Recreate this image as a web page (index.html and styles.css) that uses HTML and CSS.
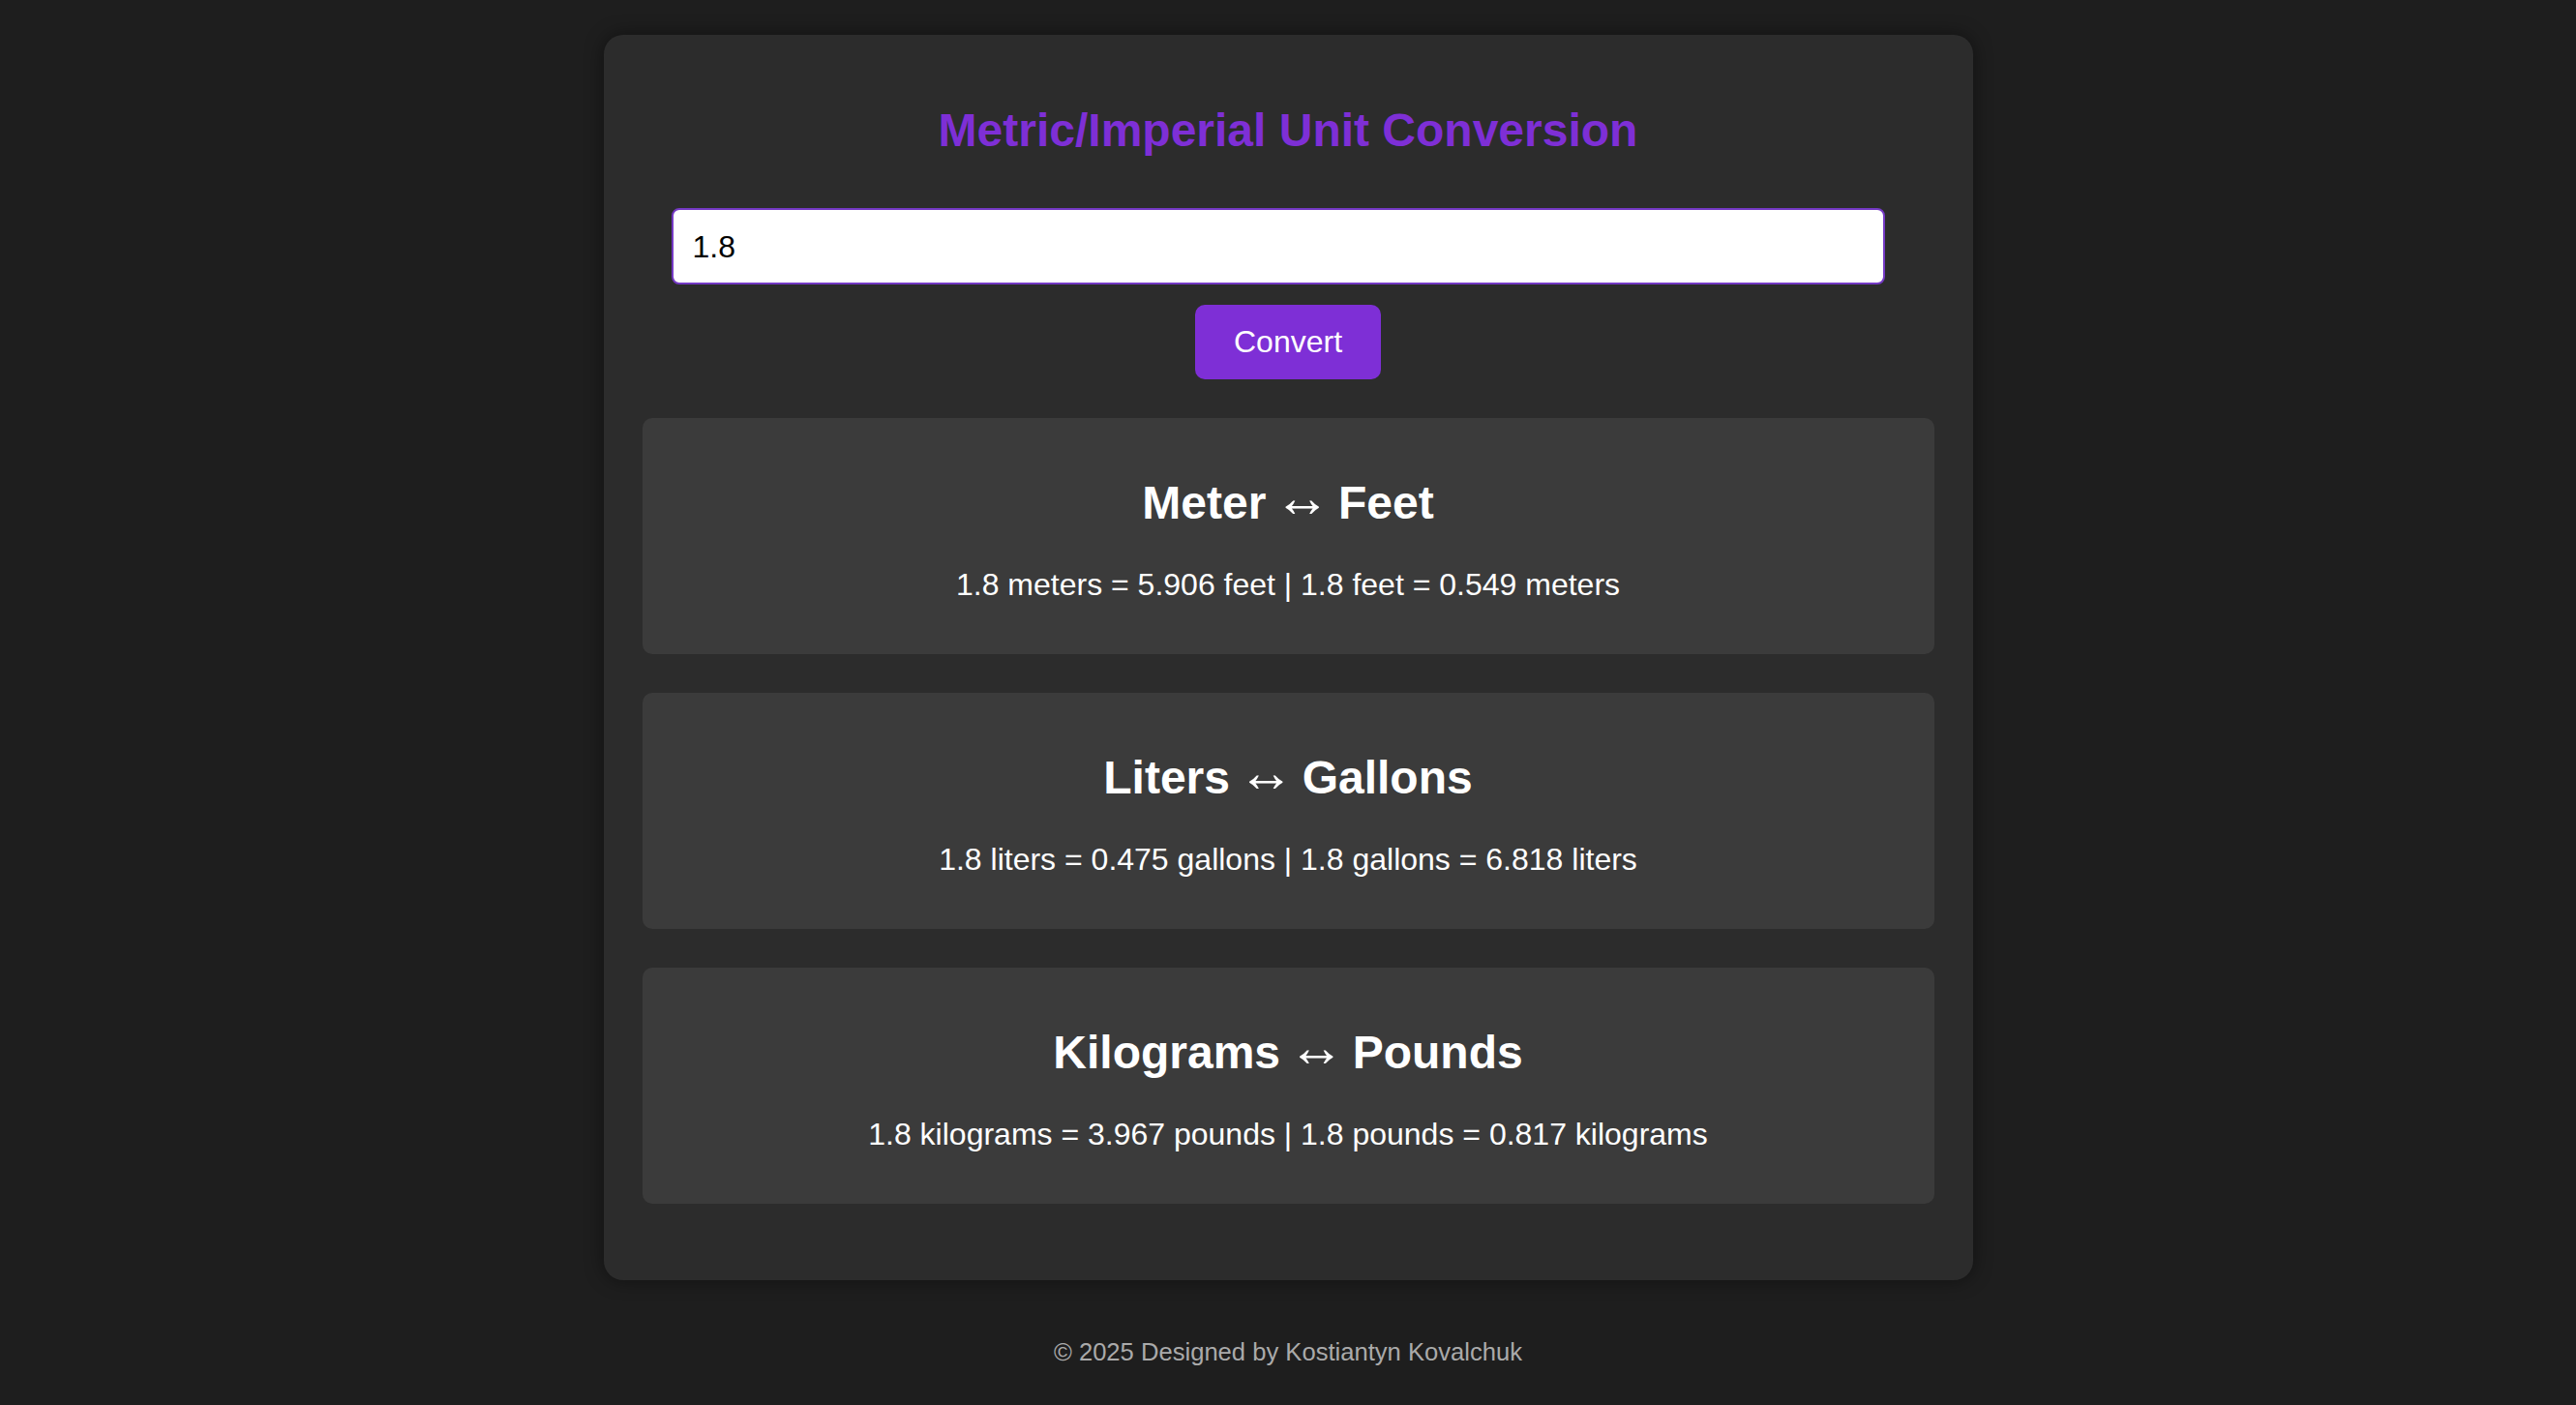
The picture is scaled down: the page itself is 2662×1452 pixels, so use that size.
FILE: index.html
```html
<!DOCTYPE html>
<html lang="en">
<head>
<meta charset="utf-8">
<title>Metric/Imperial Unit Conversion</title>
<link rel="stylesheet" href="styles.css">
</head>
<body>
<main class="container">
  <h1 class="title">Metric/Imperial Unit Conversion</h1>
  <input class="number-input" type="text" value="1.8">
  <button class="convert-btn" type="button">Convert</button>
  <section class="card">
    <h2 class="card-title">Meter <span class="arrow">↔</span> Feet</h2>
    <p class="card-text">1.8 meters = 5.906 feet | 1.8 feet = 0.549 meters</p>
  </section>
  <section class="card">
    <h2 class="card-title">Liters <span class="arrow">↔</span> Gallons</h2>
    <p class="card-text">1.8 liters = 0.475 gallons | 1.8 gallons = 6.818 liters</p>
  </section>
  <section class="card">
    <h2 class="card-title">Kilograms <span class="arrow">↔</span> Pounds</h2>
    <p class="card-text">1.8 kilograms = 3.967 pounds | 1.8 pounds = 0.817 kilograms</p>
  </section>
</main>
<footer class="footer">© 2025 Designed by Kostiantyn Kovalchuk</footer>
</body>
</html>
```
FILE: styles.css
```css
* {
  box-sizing: border-box;
}

html, body {
  margin: 0;
  padding: 0;
}

body {
  background: #1e1e1e;
  font-family: "Liberation Sans", Arial, sans-serif;
  color: #ffffff;
  padding-top: 36px;
}

.container {
  width: 1415px;
  margin: 0 auto;
  background: #2c2c2c;
  border-radius: 20px;
  padding: 40px 40px 79px;
  box-shadow: 0 0 20px rgba(0, 0, 0, 0.45);
  display: flex;
  flex-direction: column;
  align-items: center;
}

.title {
  margin: 31px 0 53px;
  font-size: 48px;
  font-weight: bold;
  line-height: normal;
  color: #7e2fd6;
  text-align: center;
}

.number-input {
  align-self: flex-start;
  margin-left: 30px;
  width: 1254px;
  height: 79px;
  padding: 2px 20px 0;
  border: 2px solid #7439c4;
  border-radius: 8px;
  background: #ffffff;
  color: #000000;
  font-family: "Liberation Sans", Arial, sans-serif;
  font-size: 32px;
  outline: none;
}

.convert-btn {
  margin-top: 21px;
  width: 192px;
  height: 77px;
  border: none;
  border-radius: 10px;
  background: #7e2fd6;
  color: #ffffff;
  font-family: "Liberation Sans", Arial, sans-serif;
  font-size: 32px;
  cursor: pointer;
}

.card {
  align-self: stretch;
  margin-top: 40px;
  background: #3b3b3b;
  border-radius: 10px;
  padding: 60px 40px 53px;
  text-align: center;
}

.card-title {
  margin: 0 0 39px;
  font-size: 48px;
  font-weight: bold;
  line-height: 55px;
  height: 55px;
}

.arrow {
  font-size: 58px;
  font-weight: normal;
  margin: 0 -5px;
  line-height: 0;
  vertical-align: 2px;
}

.card-text {
  margin: 0;
  font-size: 32px;
  line-height: normal;
}

.footer {
  margin-top: 60px;
  text-align: center;
  font-size: 25.6px;
  color: #aaaaaa;
}
```
